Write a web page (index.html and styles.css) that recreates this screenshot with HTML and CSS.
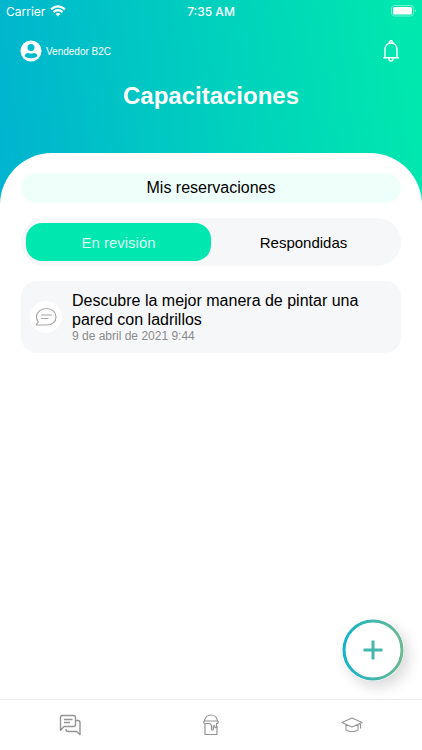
FILE: index.html
```html
<!DOCTYPE html>
<html lang="es">
<head>
<meta charset="utf-8">
<meta name="viewport" content="width=device-width, initial-scale=1">
<title>Capacitaciones</title>
<link rel="stylesheet" href="styles.css">
</head>
<body>
<div class="app">
  <header class="header">
    <div class="status">
      <span class="carrier">Carrier
        <svg width="16" height="12" viewBox="0 0 16 12" fill="none" stroke="#fff" stroke-width="2.2" aria-hidden="true"><path d="M1 4.4Q8-1.7 15 4.4M3.5 7.1Q8 3.2 12.5 7.1"/><path d="M5.6 9Q8 7 10.4 9L8 11.5z" fill="#fff" stroke="none"/></svg>
      </span>
      <span class="time">7:35 AM</span>
      <span class="battery"><svg width="26" height="12" viewBox="0 0 26 12" aria-hidden="true"><rect x="1.500" y=".5" width="22" height="10.5" rx="3" fill="none" stroke="#fff" stroke-opacity=".45"/><rect x="3" y="2" width="19" height="7.5" rx="1.5" fill="#fff"/><path d="M25 4q1.5 1.700 0 3.600z" fill="#fff" fill-opacity=".6"/></svg></span>
    </div>
    <div class="userbar">
      <a class="user" href="#perfil">
        <svg width="22" height="22" viewBox="0 0 22 22" aria-hidden="true"><circle cx="11" cy="11" r="10.5" fill="#fff"/><circle cx="11" cy="7.6" r="3.500" fill="#00bccb"/><path d="M4.500 16.200Q5.400 12.900 8.300 12.900Q11 14 13.700 12.900Q16.600 12.900 17.500 16.200Q15.200 18.200 11 18.200T4.500 16.200z" fill="#00bccb"/></svg>
        <span>Vendedor B2C</span>
      </a>
      <button class="bell" type="button" aria-label="Notificaciones">
        <svg width="18" height="22" viewBox="0 0 18 22" fill="none" stroke="#fff" stroke-width="1.4" aria-hidden="true"><path d="M1 17.700H17M3 17.700V10C3 5.500 5.600 3 9 3S15 5.500 15 10V17.700M7.300 3.200V2.500a1.700 1.700 0 0 1 3.400 0V3.200M7 17.800V19a2 2 0 0 0 4 0V17.800"/></svg>
      </button>
    </div>
    <h1>Capacitaciones</h1>
  </header>
  <main class="sheet">
    <h2>Mis reservaciones</h2>
    <div class="tabs" role="tablist">
      <button class="tab active" type="button" role="tab" aria-selected="true">En revisión</button>
      <button class="tab" type="button" role="tab" aria-selected="false">Respondidas</button>
    </div>
    <article class="card">
      <span class="bubble"><svg width="22" height="20" viewBox="0 0 22 20" fill="none" stroke="#a6a6a6" stroke-width="1.200" stroke-linecap="round" stroke-linejoin="round" aria-hidden="true"><path d="M11.500 1.500C17 1.500 21 5 21 10S17 18 11.500 18H1.500Q1 17.500 1.500 17Q3 16 3.300 14.800Q1.500 12.500 1.500 10C1.500 5 6 1.500 11.500 1.500zM6.500 8H16.500M6.500 11.500H13"/></svg></span>
      <div>
        <h3>Descubre la mejor manera de pintar una pared con ladrillos</h3>
        <p>9 de abril de 2021 9:44</p>
      </div>
    </article>
  </main>
  <footer class="bottom">
    <button class="fab" type="button" aria-label="Nueva reservación">
      <svg width="62" height="62" viewBox="0 0 62 62" fill="none" aria-hidden="true"><defs><linearGradient id="ring" gradientUnits="userSpaceOnUse" x1="0" y1="31" x2="62" y2="31"><stop stop-color="#12b2cb"/><stop offset="1" stop-color="#6fb990"/></linearGradient></defs><circle cx="31" cy="31" r="29" fill="#fff" stroke="url(#ring)" stroke-width="3"/><path d="M21.500 31H40.500" stroke="#43b6ad" stroke-width="3"/><path d="M31 21.500V40.500" stroke="#43b6ad" stroke-width="3"/></svg>
    </button>
    <nav class="nav">
      <a href="#mensajes" aria-label="Mensajes"><svg width="22" height="22" viewBox="0 0 22 22" fill="none" stroke="#949494" stroke-width="1.400" stroke-linejoin="round" aria-hidden="true"><path d="M3.500 1.500H14.500Q16.500 1.500 16.500 3.500V10.500Q16.500 12.500 14.500 12.500H5L1.500 16.200V3.500Q1.500 1.500 3.500 1.500zM5 5.500H13.500M5 8.500H11M16.500 6.500H19Q21 6.500 21 8.500V20.500L17.500 17.500H9Q7 17.500 7 15.500V15"/></svg></a>
      <a href="#pinturas" aria-label="Pinturas"><svg width="18" height="22" viewBox="0 0 18 22" fill="none" stroke="#949494" stroke-width="1.200" stroke-linejoin="round" aria-hidden="true"><path d="M2.500 7C3 3.500 5.500 1 9 1S15 3.500 15.500 7M2.500 7H15.500Q17 8.250 15.500 9.500H14.500V13Q13.500 14.500 12.700 13V12Q12 11 11.300 12V15.500Q10.300 17 9.500 15.500V11.500Q8.500 9.500 7 9.500H2.500Q1 8.250 2.500 7zM3 9.500V20.500H15V12"/></svg></a>
      <a href="#capacitaciones" aria-label="Capacitaciones"><svg width="22" height="18" viewBox="0 0 22 18" fill="none" stroke="#949494" stroke-width="1.100" stroke-linejoin="round" aria-hidden="true"><path d="M1 6.500L11 2L21 6.500L11 11zM5 8.500V14Q11 17.500 17 14V8.500M19.500 7.200V12.500"/></svg></a>
    </nav>
  </footer>
</div>
</body>
</html>
```
FILE: styles.css
```css
* { box-sizing: border-box; }
body { margin: 0; background: #fff; color: #000; font-family: "Liberation Sans", Arial, sans-serif; }
h1, h2, h3, p { margin: 0; font-weight: 400; }
button { padding: 0; border: 0; background: none; color: inherit; font: inherit; }
a { color: inherit; text-decoration: none; }
svg { display: block; }

.app { min-height: 100vh; display: flex; flex-direction: column; }
.header { padding-bottom: 96px; color: #fff; background: linear-gradient(82deg, #00b4cf 2%, #00e8ae 96%); }
.status { display: grid; grid-template-columns: 1fr auto 1fr; align-items: center; height: 22px; padding: 0 6px; font: 12px Inter, sans-serif; }
.carrier { display: flex; align-items: center; gap: 5px; }
.time { font-weight: 500; }
.battery { justify-self: end; }
.userbar { display: flex; justify-content: space-between; align-items: center; height: 58px; padding: 0 22px 0 20px; }
.user { display: flex; align-items: center; gap: 4px; font-size: 10px; }
h1 { font-size: 24px; font-weight: 700; line-height: 32px; text-align: center; }

.sheet { flex: 1; margin-top: -55px; padding: 20px 21px 0; border-radius: 52px 52px 0 0; background: #fff; }
h2 { border-radius: 15px; background: #effffa; font-size: 16px; line-height: 30px; text-align: center; }
.tabs { display: flex; height: 48px; margin-top: 15px; padding: 5px; border-radius: 24px; background: #f6f7f9; }
.tab { flex: 1; border-radius: 16px; font-size: 15px; }
.tab.active { background: #00e7af; color: #dffff5; }
.card { display: flex; align-items: center; gap: 10px; margin-top: 15px; padding: 10px 9px; border-radius: 16px; background: #f6f7f9; }
.bubble { flex: none; display: grid; place-items: center; width: 32px; height: 32px; border-radius: 50%; background: #fff; }
h3 { font-size: 16px; line-height: 19px; }
.card p { color: #8b8b8d; font-size: 12px; line-height: 14px; }

.bottom { position: sticky; bottom: 0; }
.fab { position: absolute; right: 18px; bottom: 69px; border-radius: 50%; box-shadow: 5px 6px 14px rgba(0, 0, 0, .15); }
.nav { display: grid; grid-template-columns: repeat(3, 1fr); height: 51px; border-top: 1px solid #ececec; background: #fff; }
.nav a { display: grid; place-items: center; }
```
